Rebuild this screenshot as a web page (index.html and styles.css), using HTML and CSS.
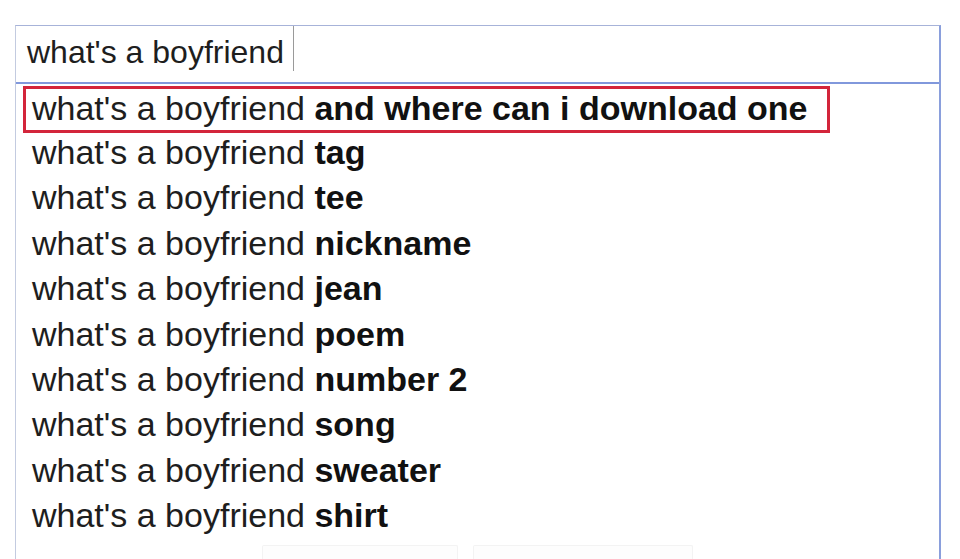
FILE: index.html
```html
<!DOCTYPE html>
<html lang="en">
<head>
<meta charset="utf-8">
<title>what's a boyfriend</title>
<link rel="stylesheet" href="styles.css">
</head>
<body>
<div class="page">
  <div class="search">
    <div class="input">
      <span class="query">what's a boyfriend</span>
      <span class="caret"></span>
    </div>
    <div class="dropdown">
      <ul class="suggestions">
        <li class="item highlight">what's a boyfriend <b>and where can i download one</b></li>
        <li class="item">what's a boyfriend <b>tag</b></li>
        <li class="item">what's a boyfriend <b>tee</b></li>
        <li class="item">what's a boyfriend <b>nickname</b></li>
        <li class="item">what's a boyfriend <b>jean</b></li>
        <li class="item">what's a boyfriend <b>poem</b></li>
        <li class="item">what's a boyfriend <b>number 2</b></li>
        <li class="item">what's a boyfriend <b>song</b></li>
        <li class="item">what's a boyfriend <b>sweater</b></li>
        <li class="item">what's a boyfriend <b>shirt</b></li>
      </ul>
      <div class="buttons">
        <span class="btn btn-search"></span>
        <span class="btn btn-lucky"></span>
      </div>
    </div>
  </div>
</div>
</body>
</html>
```
FILE: styles.css
```css
html, body {
  margin: 0;
  padding: 0;
  background: #ffffff;
}

body {
  font-family: "Liberation Sans", Arial, sans-serif;
  color: #1c1c1c;
  overflow: hidden;
  height: 559px;
}

.page {
  padding: 25px 0 0 15px;
}

.search {
  width: 926px;
  box-sizing: border-box;
  border-top: 1px solid #a7b3d9;
  border-left: 1px solid #c3cbe0;
  border-right: 2px solid #8a9fdc;
}

.input {
  display: flex;
  align-items: flex-start;
  height: 56px;
  padding-left: 11px;
}

.query {
  font-size: 32px;
  line-height: 36px;
  margin-top: 8px;
  color: #1e1e1e;
}

.caret {
  width: 0;
  height: 45px;
  margin-left: 9px;
  border-left: 1px solid #9a9a9a;
}

.dropdown {
  border-top: 2px solid #8198dc;
  padding-top: 2px;
}

.suggestions {
  list-style: none;
  margin: 0;
  padding: 0;
}

.item {
  font-size: 34px;
  line-height: 36px;
  padding: 1px 0 8.375px 16px;
  color: #1e1e1e;
  white-space: nowrap;
}

.item b {
  font-weight: bold;
  color: #111111;
}

.item.highlight {
  box-sizing: border-box;
  width: 807px;
  margin-left: 7px;
  border: 3px solid #d3253b;
  padding: 1px 0 4px 6px;
}

.buttons {
  display: flex;
  justify-content: center;
  gap: 15px;
  padding-top: 4px;
}

.btn {
  display: block;
  height: 28px;
  border: 1px solid #f3f3f3;
  border-bottom-color: #ebebeb;
  border-radius: 2px;
  background: #fdfdfd;
}

.btn-search {
  width: 194px;
}

.btn-lucky {
  width: 218px;
}
```
